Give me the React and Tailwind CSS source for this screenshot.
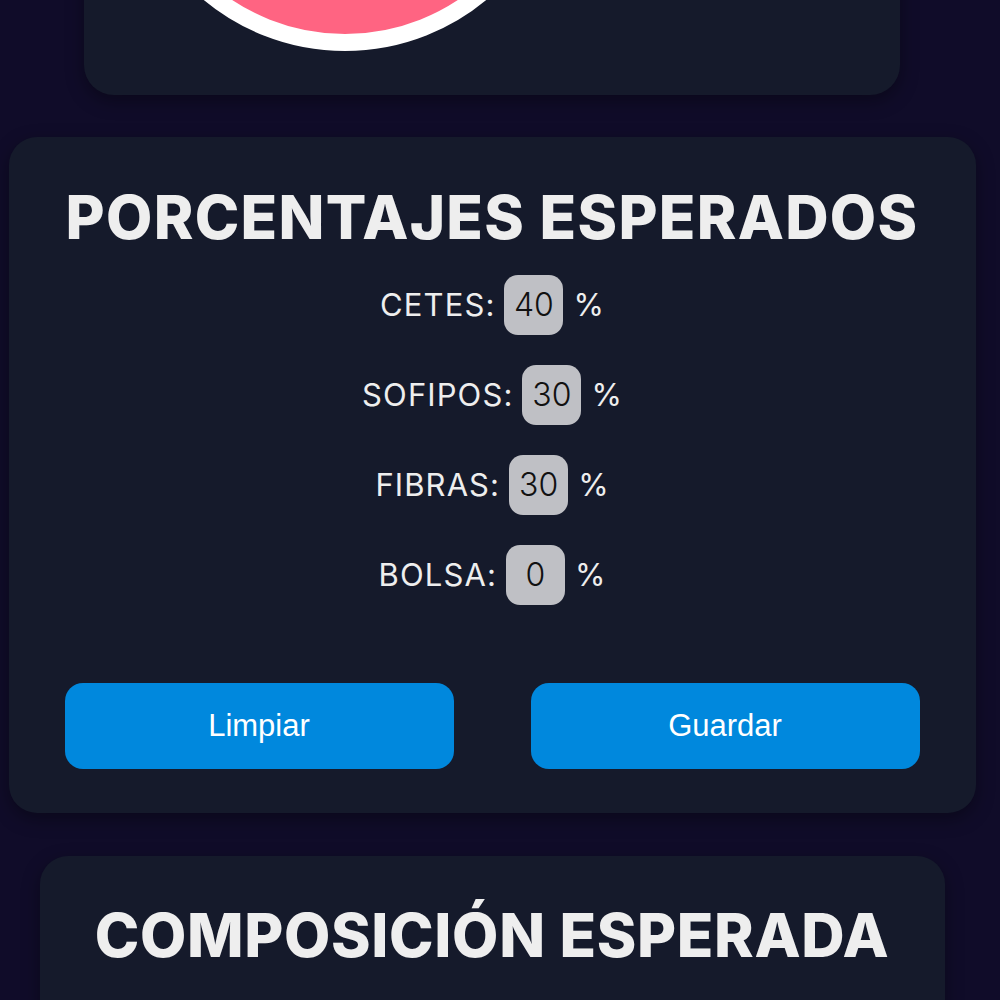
export default function App() {
  const rows = [
    ["CETES:", "40"],
    ["SOFIPOS:", "30"],
    ["FIBRAS:", "30"],
    ["BOLSA:", "0"],
  ];
  return (
    <div className="h-[1000px] overflow-hidden bg-[#100c29]">
      <div className="w-[984px] flex flex-col items-center">
        <div className="mt-[-412px] w-[816px] rounded-[30px] bg-[#151a2b] shadow-[0_6px_18px_rgba(0,0,0,0.35)] pt-[21px] pb-[44px] pl-[40px] flex">
          <svg width="442" height="442" viewBox="0 0 442 442" className="shrink-0">
            <circle cx="221" cy="221" r="212.5" fill="#ff6482" stroke="#ffffff" strokeWidth="17" />
          </svg>
        </div>

        <div className="mt-[42px] w-[967px] rounded-[28px] bg-[#151a2b] shadow-[0_6px_18px_rgba(0,0,0,0.35)] pt-[50px] pb-[44px] px-[56px] flex flex-col items-center">
          <h2 className="h-[60px] leading-[60px] text-[60px] font-extrabold tracking-[1.3px] text-[#eeeeee] text-center font-['Inter',sans-serif] whitespace-nowrap">
            PORCENTAJES ESPERADOS
          </h2>
          <div className="mt-[13px] flex flex-col">
            {rows.map(([label, val]) => (
              <div key={label} className="h-[90px] flex items-center justify-center font-['Inter',sans-serif] text-[31px] text-[#eeeeee]">
                <span className="tracking-[1.1px]">{label}</span>
                <span className="ml-[9px] w-[59px] h-[60px] rounded-[14px] bg-[#bfc0c5] text-[#111111] text-[32px] font-light flex items-center justify-center">
                  {val}
                </span>
                <span className="ml-[10px]">%</span>
              </div>
            ))}
          </div>
          <div className="mt-[63px] w-full flex justify-between">
            <button className="w-[389px] h-[86px] rounded-[18px] bg-[#0088dd] text-white text-[31px] font-['Liberation_Sans',Arial,sans-serif]">
              Limpiar
            </button>
            <button className="w-[389px] h-[86px] rounded-[18px] bg-[#0088dd] text-white text-[31px] font-['Liberation_Sans',Arial,sans-serif]">
              Guardar
            </button>
          </div>
        </div>

        <div className="mt-[43px] w-[905px] h-[300px] rounded-t-[28px] bg-[#151a2b] shadow-[0_6px_18px_rgba(0,0,0,0.35)] pt-[49px] flex flex-col items-center">
          <h2 className="h-[60px] leading-[60px] text-[60px] font-extrabold tracking-[0.65px] text-[#eeeeee] text-center font-['Inter',sans-serif] whitespace-nowrap">
            COMPOSICIÓN ESPERADA
          </h2>
        </div>
      </div>
    </div>
  );
}
